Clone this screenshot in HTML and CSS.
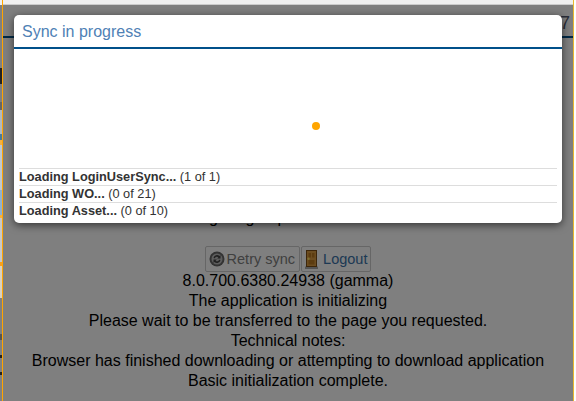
FILE: index.html
```html
<!DOCTYPE html>
<html lang="en">
<head>
  <meta charset="UTF-8" />
  <meta name="viewport" content="width=device-width, initial-scale=1" />
  <title>Sync in progress</title>
  <link rel="stylesheet" href="styles.css">
</head>
<body>
  <div class="frame">
    <div class="strip"></div>
    <div class="main">
      <div class="topbar"></div>
      <div class="page">
        <div class="page-header">
          <span class="page-title">Loading AAS / AAS Tab application</span>
          <span class="page-version">7</span>
        </div>
        <div class="page-body">
          <div class="status-line">Waiting for group to be reinitialized</div>
          <div class="actions">
            <button class="action action-retry">
              <svg width="16" height="16" viewBox="0 0 16 16">
                <circle cx="8" cy="8" r="7.5" fill="#666" />
                <circle cx="8" cy="8" r="5.5" fill="#bbb" />
                <path d="M4.5 7a3.6 3.6 0 0 1 6-2l1-1v3.400H8.200l1.200-1.200A2.200 2.200 0 0 0 5.900 7.300z" fill="#444" />
                <path d="M11.500 9a3.600 3.600 0 0 1-6 2l-1 1V8.600h3.300L6.600 9.800a2.200 2.200 0 0 0 3.500-1.100z" fill="#444" />
              </svg>
              Retry sync
            </button>
            <button class="action action-logout">
              <svg width="13" height="19" viewBox="0 0 13 19">
                <rect x="0" y="16.500" width="13" height="2.500" fill="#aaa" />
                <rect x="1.500" y="0.500" width="10" height="16" fill="#d89a40" stroke="#7a4c14" />
                <rect x="3.500" y="3" width="2.500" height="4.500" fill="#b87820" />
                <rect x="7" y="3" width="2.500" height="4.500" fill="#b87820" />
                <rect x="3.500" y="10" width="6" height="4.500" fill="#b87820" />
                <circle cx="3.500" cy="8.700" r="1.200" fill="#ffe060" />
              </svg>
              Logout
            </button>
          </div>
          <div>8.0.700.6380.24938 (gamma)</div>
          <div>The application is initializing</div>
          <div>Please wait to be transferred to the page you requested.</div>
          <div>Technical notes:</div>
          <div>Browser has finished downloading or attempting to download application</div>
          <div>Basic initialization complete.</div>
        </div>
      </div>
      <div class="overlay"></div>
    </div>
    <div class="edge"></div>

    <div class="modal">
      <div class="modal-header">Sync in progress</div>
      <div class="modal-body">
        <div class="spinner">
          <span class="spinner-dot"></span>
        </div>
        <div class="sync-row sync-active"><b>Loading LoginUserSync...</b> (1 of 1)</div>
        <div class="sync-row"><b>Loading WO...</b> (0 of 21)</div>
        <div class="sync-row"><b>Loading Asset...</b> (0 of 10)</div>
      </div>
    </div>
  </div>
</body>
</html>
```

FILE: styles.css
```css
html, body {
  margin: 0;
  height: 100%;
  overflow: hidden;
  background-color: #fff;
  font-family: "Liberation Sans", Arial, sans-serif;
}

.frame {
  position: relative;
  display: flex;
  height: 401px;
}

/* Sliver of the window behind */
.strip {
  width: 2px;
  background: linear-gradient(to bottom,
    #f0f0f0 0, #f0f0f0 5px,
    #808080 5px, #808080 68px,
    #222 68px, #222 84px,
    #808080 84px, #808080 102px,
    #666 102px, #666 110px,
    #b0b8c0 110px, #b0b8c0 134px,
    #4a7a9a 134px, #4a7a9a 140px,
    #f5b040 140px, #f5b040 145px,
    #c0c8d0 145px, #c0c8d0 190px,
    #8fb0d0 190px, #8fb0d0 215px,
    #f5b040 215px, #f5b040 218px,
    #c8c8c8 218px, #c8c8c8 262px,
    #f5a020 262px, #f5a020 266px,
    #d8d0c0 266px, #d8d0c0 298px,
    #808080 298px, #808080 334px,
    #555 334px, #555 340px,
    #808080 340px, #808080 355px,
    #222 355px, #222 358px,
    #808080 358px, #808080 372px,
    #222 372px, #222 375px,
    #808080 375px);
}

.main {
  position: relative;
  flex: 1;
  border-left: 1px solid #ffa500;
  border-right: 1px solid #e8b830;
  background-color: #fff;
}

.edge {
  width: 2px;
}

.topbar {
  height: 4px;
  background-color: #f0f0f0;
  border-bottom: 1px solid #ccc;
}

.page-header {
  display: flex;
  justify-content: space-between;
  height: 33px;
  padding: 8px 3px 0 33px;
  box-sizing: border-box;
  border-bottom: 2px solid #00508a;
  font-size: 18px;
  color: #2f6ea5;
}

.page-title, .page-version {
  line-height: 20px;
}

.page-version {
  color: #555a70;
}

.page-body {
  padding-top: 170px;
  font-size: 16px;
  line-height: 20px;
  text-align: center;
  color: #000;
}

.actions {
  display: flex;
  justify-content: center;
  gap: 1px;
  margin: 18px 0 -1px;
}

.action {
  display: flex;
  align-items: center;
  height: 26px;
  background-color: #fff;
  border: 1px solid #ccc;
  border-radius: 2px;
  font-family: inherit;
  font-size: 14.5px;
}

.action-retry {
  gap: 2px;
  padding: 0 4px 0 3px;
  color: #808080;
}

.action-logout {
  gap: 5px;
  padding: 0 3px;
  color: #3a72a8;
}

.overlay {
  position: absolute;
  top: 5px;
  left: 0;
  right: 0;
  bottom: 0;
  background-color: rgba(0, 0, 0, 0.5);
}

.modal {
  position: absolute;
  top: 15px;
  left: 14px;
  width: 548px;
  height: 208px;
  background-color: #fff;
  border-radius: 5px;
  box-shadow: 0 2px 8px rgba(0, 0, 0, 0.6);
}

.modal-header {
  height: 34px;
  box-sizing: border-box;
  padding: 8px 8px 0;
  border-bottom: 2px solid #00508a;
  font-size: 16px;
  line-height: 18px;
  color: #4f81b5;
}

.modal-body {
  padding: 0 5px;
}

.spinner {
  position: relative;
  height: 119px;
}

.spinner-dot {
  position: absolute;
  top: 73px;
  left: 293px;
  width: 8px;
  height: 8px;
  border-radius: 50%;
  background-color: #ffa500;
}

.sync-row {
  height: 17px;
  box-sizing: border-box;
  border-top: 1px solid #ddd;
  font-size: 12.75px;
  line-height: 16px;
  color: #333;
}
```
